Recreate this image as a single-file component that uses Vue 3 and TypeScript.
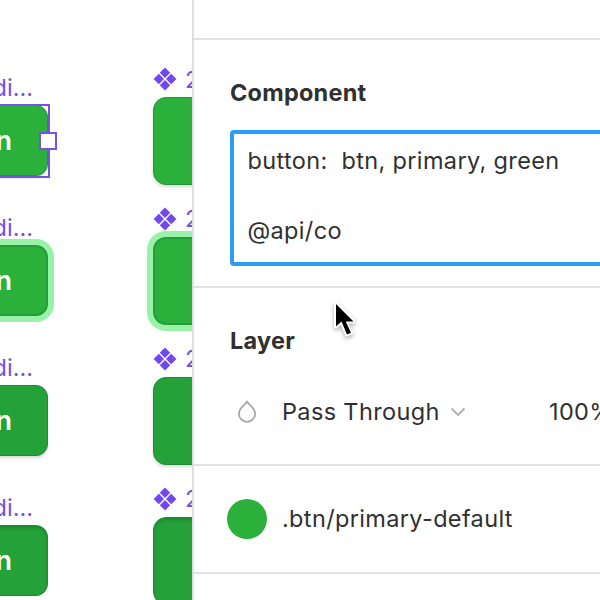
<script setup lang="ts">
import { ref } from 'vue'

type ButtonState = 'selected' | 'focus' | 'hover' | 'pressed'

const variants: ButtonState[] = ['selected', 'focus', 'hover', 'pressed']
const description = ref('button:  btn, primary, green\n\n@api/co')
</script>

<template>
  <main class="editor">
    <section class="canvas">
      <div v-for="state in variants" :key="state" class="row">
        <div class="medium">
          <div class="label medium-label">di...</div>
          <div class="btn medium-btn" :class="state">
            <span>n</span>
            <div v-if="state === 'selected'" class="selection"><i class="handle"></i></div>
          </div>
        </div>
        <div class="large">
          <div class="label large-label">
            <svg width="24" height="24" viewBox="0 0 24 24" fill="#7048ee">
              <path d="M12 .6 17.2 5.8 12 11 6.8 5.8zM5.8 6.8 11 12 5.8 17.2.6 12zM18.2 6.8 23.4 12 18.2 17.2 13 12zM12 13 17.2 18.2 12 23.4 6.8 18.2z" />
            </svg>
            <span>2</span>
          </div>
          <div class="btn large-btn" :class="state"></div>
        </div>
      </div>
    </section>

    <aside class="panel">
      <div class="toolbar"></div>
      <section class="component">
        <h2>Component</h2>
        <div class="description">{{ description }}</div>
      </section>
      <section class="layer">
        <h2>Layer</h2>
        <div class="blend">
          <svg class="drop" width="20" height="24" viewBox="0 0 20 24" fill="none" stroke="#a6a6a6" stroke-width="1.8">
            <path d="M10 1.800C8.300 4.600 1.900 8.200 1.900 13.700a8.100 8.100 0 0 0 16.200 0C18.100 8.200 11.700 4.600 10 1.800z" />
          </svg>
          <span class="mode">Pass Through</span>
          <svg class="chevron" width="16" height="10" viewBox="0 0 16 10" fill="none" stroke="#b0b0b0" stroke-width="1.9">
            <path d="M1.5 1.5 8 8l6.500-6.500" />
          </svg>
          <span class="opacity">100%</span>
        </div>
      </section>
      <section class="style-row">
        <i class="swatch"></i>
        <span>.btn/primary-default</span>
      </section>
    </aside>

    <svg class="cursor" width="32" height="46" viewBox="0 0 32 46">
      <path d="M4 5v22.500l5.500-5 5.500 13 4-1.800-5.300-11.200h7.800z" />
    </svg>
  </main>
</template>

<style>
body {
  margin: 0;
  overflow: hidden;
}
</style>

<style scoped>
.editor {
  position: relative;
  display: flex;
  width: 600px;
  height: 600px;
  overflow: hidden;
  background: #fff;
  color: #303030;
  font-family: Inter, "Liberation Sans", sans-serif;
  font-size: 23.500px;
  letter-spacing: 0.350px;
}
.canvas {
  flex: none;
  width: 192px;
  padding-top: 65px;
  box-sizing: border-box;
  overflow: hidden;
}
.row {
  display: flex;
  justify-content: space-between;
  height: 139.850px;
}
.label {
  color: #7450ea;
  letter-spacing: 0;
  white-space: nowrap;
}
.medium {
  width: 48px;
  display: flex;
  flex-direction: column;
  align-items: flex-end;
}
.medium-label {
  height: 40px;
  line-height: 46px;
  margin-right: 15px;
}
.large {
  width: 39.500px;
}
.large-label {
  display: flex;
  align-items: center;
  gap: 8px;
  height: 28px;
  margin-bottom: 4px;
}
.large-label svg {
  flex: none;
  margin-left: 0.500px;
}
.btn {
  position: relative;
  box-sizing: border-box;
  background: #2bb03c;
  border: 1px solid #23963a;
  box-shadow: 0 2px 3px #00000026;
}
.medium-btn {
  flex: none;
  width: 60px;
  height: 71px;
  padding-right: 35px;
  border-radius: 12px;
  color: #fff;
  font-size: 27px;
  font-weight: 600;
  letter-spacing: 0;
  line-height: 70px;
  text-align: right;
}
.large-btn {
  width: 220px;
  height: 88px;
  border-radius: 13px;
}
.focus {
  border: 2px solid #259c3a;
  box-shadow: 0 0 0 6px #98f3a8;
}
.medium-btn.focus {
  line-height: 68px;
  padding-right: 34px;
}
.hover,
.pressed {
  background: #25a139;
  border-color: #218a35;
}
.pressed {
  box-shadow: inset 0 2px 3px #14702a80;
}
.selection {
  position: absolute;
  inset: -2px -3px -3px -3px;
  border: 2px solid #7551e8;
}
.handle {
  position: absolute;
  right: -9px;
  top: 50%;
  width: 14px;
  height: 14px;
  margin-top: -9px;
  border: 2px solid #7551e8;
  background: #fff;
}
.panel {
  flex: 1;
  min-width: 0;
  display: flex;
  flex-direction: column;
  background: #fff;
  border-left: 2px solid #dedede;
}
.toolbar {
  height: 37.500px;
  border-bottom: 2px solid #e2e2e2;
}
.component {
  box-sizing: border-box;
  height: 248px;
  padding: 38px 0 0 36px;
  border-bottom: 2px solid #e2e2e2;
}
h2 {
  margin: 0;
  font-size: 23.500px;
  font-weight: 700;
  letter-spacing: 0.220px;
  line-height: 30px;
}
.description {
  box-sizing: border-box;
  width: 400px;
  height: 136px;
  margin-top: 22px;
  padding: 9px 13.500px;
  border: 4px solid #2b9df6;
  border-radius: 4px;
  line-height: 35px;
  white-space: pre;
}
.layer {
  box-sizing: border-box;
  height: 178px;
  padding: 38px 0 0 36px;
  border-bottom: 2px solid #e2e2e2;
}
.blend {
  display: flex;
  align-items: center;
  height: 40px;
  margin-top: 36px;
  padding-left: 7px;
  white-space: nowrap;
}
.drop {
  flex: none;
}
.mode {
  flex: none;
  width: 158px;
  margin-left: 25px;
}
.chevron {
  flex: none;
  margin-left: 10px;
}
.opacity {
  margin-left: 83px;
}
.style-row {
  display: flex;
  align-items: center;
  gap: 15px;
  height: 106px;
  padding-left: 33px;
  border-bottom: 2px solid #e2e2e2;
}
.swatch {
  width: 40px;
  height: 40px;
  border-radius: 50%;
  background: #2bb03c;
}
.cursor {
  position: absolute;
  left: 332px;
  top: 299px;
  overflow: visible;
  fill: #000;
  stroke: #fff;
  stroke-width: 4px;
  stroke-linejoin: round;
  paint-order: stroke;
  filter: drop-shadow(0 2px 2px #0005);
}
</style>
